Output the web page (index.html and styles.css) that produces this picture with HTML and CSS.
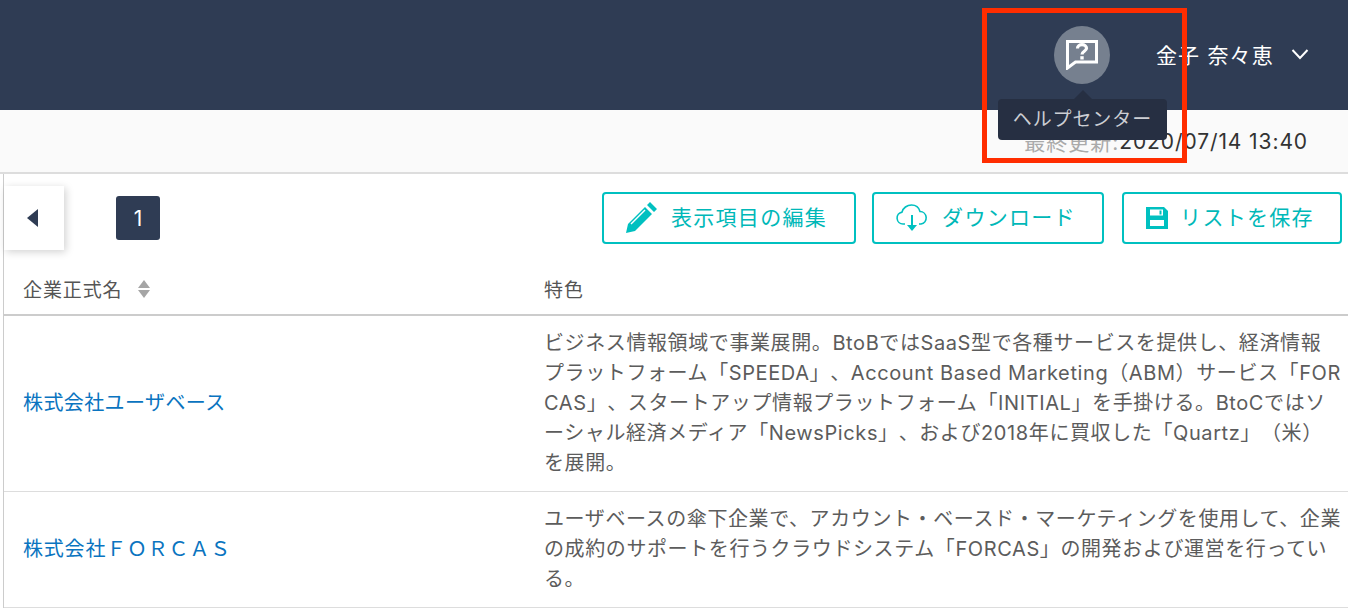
FILE: index.html
```html
<!DOCTYPE html>
<html lang="ja">
<head>
<meta charset="utf-8">
<title>企業リスト</title>
<link rel="stylesheet" href="styles.css">
</head>
<body>
<header class="topbar">
  <div class="help-wrap">
    <span class="help-btn">
      <svg class="help-icon" viewBox="0 0 32 30" aria-hidden="true"><path d="M1.500 1.500h29v20.500H9.500L1.500 28z" fill="none" stroke="#fff" stroke-width="3"/><path d="M11.500 8.500c0-2.400 2-3.800 4.500-3.800s4.500 1.400 4.500 3.600c0 3-4.500 3-4.500 6.200" fill="none" stroke="#fff" stroke-width="3.200"/><path d="M14.300 16.200h3.400v3.300h-3.400z" fill="#fff"/></svg>
    </span>
    <div class="tooltip">ヘルプセンター</div>
  </div>
  <div class="user">
    <span>金子 奈々恵</span>
    <svg class="chevron" viewBox="0 0 18 12" aria-hidden="true"><path d="M1.500 2l7.500 8 7.500-8" fill="none" stroke="#fff" stroke-width="2"/></svg>
  </div>
</header>
<div class="subbar"><span class="updated-label">最終更新:</span><span class="updated-value">2020/07/14 13:40</span></div>
<main class="content">
  <div class="toolbar">
    <button class="collapse" type="button"><span class="tri"></span></button>
    <span class="page">1</span>
    <div class="actions">
      <button class="action action-edit" type="button">
        <svg class="ic-pencil" viewBox="0 0 32 32" aria-hidden="true"><path d="M1 31l2-9L20 5l7 7-17 17z M22 3l3-3 7 7-3 3z" fill="#00c0c0"/><path d="M6 22L20 8" stroke="#fff" stroke-width="1.500"/></svg>
        <span>表示項目の編集</span>
      </button>
      <button class="action action-dl" type="button">
        <svg class="ic-cloud" viewBox="0 0 32 28" aria-hidden="true"><path d="M9 20H7a6 6 0 0 1-1-11.900C7 4 11 1 15.500 1c4.300 0 7.500 2.800 8.500 6.500A6.300 6.300 0 0 1 25 20h-2" fill="none" stroke="#00c0c0" stroke-width="1.600"/><path d="M16 11v13" stroke="#00c0c0" stroke-width="2"/><path d="M11 21h10l-5 6z" fill="#00c0c0"/></svg>
        <span>ダウンロード</span>
      </button>
      <button class="action action-save" type="button">
        <svg class="ic-save" viewBox="0 0 22 22" aria-hidden="true"><path d="M0 0h18l4 4v18H0z" fill="#00c0c0"/><path d="M4 2.500h13v6H4z M4 13h14v6H4z" fill="#fff"/><path d="M13.500 3.500h2v4h-2z" fill="#00c0c0"/></svg>
        <span>リストを保存</span>
      </button>
    </div>
  </div>
  <table class="grid">
    <colgroup><col class="col-name"><col></colgroup>
    <thead>
      <tr><th>企業正式名<span class="sort"></span></th><th>特色</th></tr>
    </thead>
    <tbody>
      <tr>
        <td><a href="#">株式会社ユーザベース</a></td>
        <td>ビジネス情報領域で事業展開。BtoBではSaaS型で各種サービスを提供し、経済情報<br>プラットフォーム「SPEEDA」、Account Based Marketing（ABM）サービス「FOR<br>CAS」、スタートアップ情報プラットフォーム「INITIAL」を手掛ける。BtoCではソ<br>ーシャル経済メディア「NewsPicks」、および2018年に買収した「Quartz」（米）<br>を展開。</td>
      </tr>
      <tr>
        <td><a class="wide" href="#">株式会社ＦＯＲＣＡＳ</a></td>
        <td>ユーザベースの傘下企業で、アカウント・ベースド・マーケティングを使用して、企業<br>の成約のサポートを行うクラウドシステム「FORCAS」の開発および運営を行ってい<br>る。</td>
      </tr>
    </tbody>
  </table>
</main>
<div class="highlight"></div>
</body>
</html>
```
FILE: styles.css
```css
* { box-sizing: border-box; }
html, body { margin: 0; height: 100%; overflow: hidden; }
body { background: #fff; font-family: "Inter", "Noto Sans CJK JP", sans-serif; font-size: 20px; color: #555; position: relative; text-spacing-trim: space-all; }
.topbar { height: 110px; background: #2f3c54; display: flex; justify-content: flex-end; align-items: center; padding-right: 39px; color: #fff; }
.help-wrap { position: relative; width: 56px; height: 58px; margin-right: 46px; }
.help-btn { display: flex; width: 56px; height: 58px; border-radius: 50%; background: #76808f; align-items: center; justify-content: center; }
.help-icon { width: 32px; height: 30px; }
.tooltip { position: absolute; z-index: 2; top: 73px; left: -56px; width: 169px; height: 41px; background: #262f42; color: #ccced3; border-radius: 4px; font-size: 19px; letter-spacing: .9px; line-height: 41px; text-align: center; white-space: nowrap; }
.tooltip::before { content: ""; position: absolute; top: -9px; left: 76px; border: 9px solid transparent; border-top: 0; border-bottom-color: #262f42; }
.user { display: flex; align-items: center; gap: 17px; font-size: 21px; letter-spacing: 1.200px; margin-top: -2px; }
.chevron { width: 18px; height: 12px; }
.subbar { height: 64px; background: #fafafa; border-bottom: 2px solid #ddd; display: flex; justify-content: flex-end; align-items: center; padding: 0 40px 0 0; }
.updated-label { color: #aaa; font-size: 21px; letter-spacing: 1px; }
.updated-value { color: #333; font-size: 21px; letter-spacing: .9px; }
.content { margin-left: 3px; border-left: 1px solid #ccc; }
.toolbar { height: 92px; display: flex; align-items: flex-start; position: relative; }
.collapse { margin-top: 12px; width: 60px; height: 64px; background: #fff; border: 0; box-shadow: 2px 2px 8px rgba(0,0,0,.18); display: flex; align-items: center; justify-content: center; padding: 0; }
.tri { border: 9px solid transparent; border-left: 0; border-right: 11px solid #2f3c54; margin-right: 3px; }
.page { margin: 22px 0 0 52px; width: 44px; height: 44px; background: #2f3c54; color: #fff; border-radius: 3px; display: flex; align-items: center; justify-content: center; font-size: 21px; }
.actions { margin-left: auto; display: flex; gap: 16px; margin-top: 18px; margin-right: 6px; }
.action { height: 52px; border: 2px solid #00c0c0; border-radius: 4px; background: #fff; color: #00b8b8; font: inherit; font-size: 21px; letter-spacing: 1.300px; display: flex; align-items: center; justify-content: center; gap: 15px; padding: 0 4px 0 0; white-space: nowrap; }
.action span { margin-top: -4px; }
.action-edit { width: 254px; gap: 14px; padding-right: 6px; }
.action-dl { width: 232px; margin-right: 2px; gap: 14px; }
.action-save { width: 220px; gap: 12px; }
.ic-pencil { width: 32px; height: 32px; }
.ic-cloud { width: 32px; height: 28px; }
.ic-save { width: 22px; height: 22px; }
.grid { width: 100%; border-collapse: collapse; table-layout: fixed; margin-top: -5px; font-size: 20px; }
.col-name { width: 521px; }
.grid th { font-weight: 400; text-align: left; padding: 1px 20px 0 19px; height: 54px; border-bottom: 2px solid #ccc; color: #555; font-size: 19px; letter-spacing: .9px; }
.grid td { padding: 12px 0 13px 19px; line-height: 30px; border-bottom: 1px solid #ddd; vertical-align: middle; letter-spacing: .6px; white-space: nowrap; color: #5c5c5c; }
.grid td a { color: #0a74c0; text-decoration: none; letter-spacing: .4px; }
.grid td a.wide { letter-spacing: .8px; }
.sort { display: inline-block; position: relative; width: 12px; height: 20px; margin-left: 15px; vertical-align: -3px; }
.sort::before, .sort::after { content: ""; position: absolute; left: 0; border: 6px solid transparent; border-top: 0; border-bottom: 8px solid #a5a5a5; }
.sort::after { top: 10px; border-bottom: 0; border-top: 8px solid #a5a5a5; }
.highlight { position: absolute; left: 982px; top: 8px; width: 205px; height: 155px; border: 5px solid #ff2d00; z-index: 3; pointer-events: none; }
```
